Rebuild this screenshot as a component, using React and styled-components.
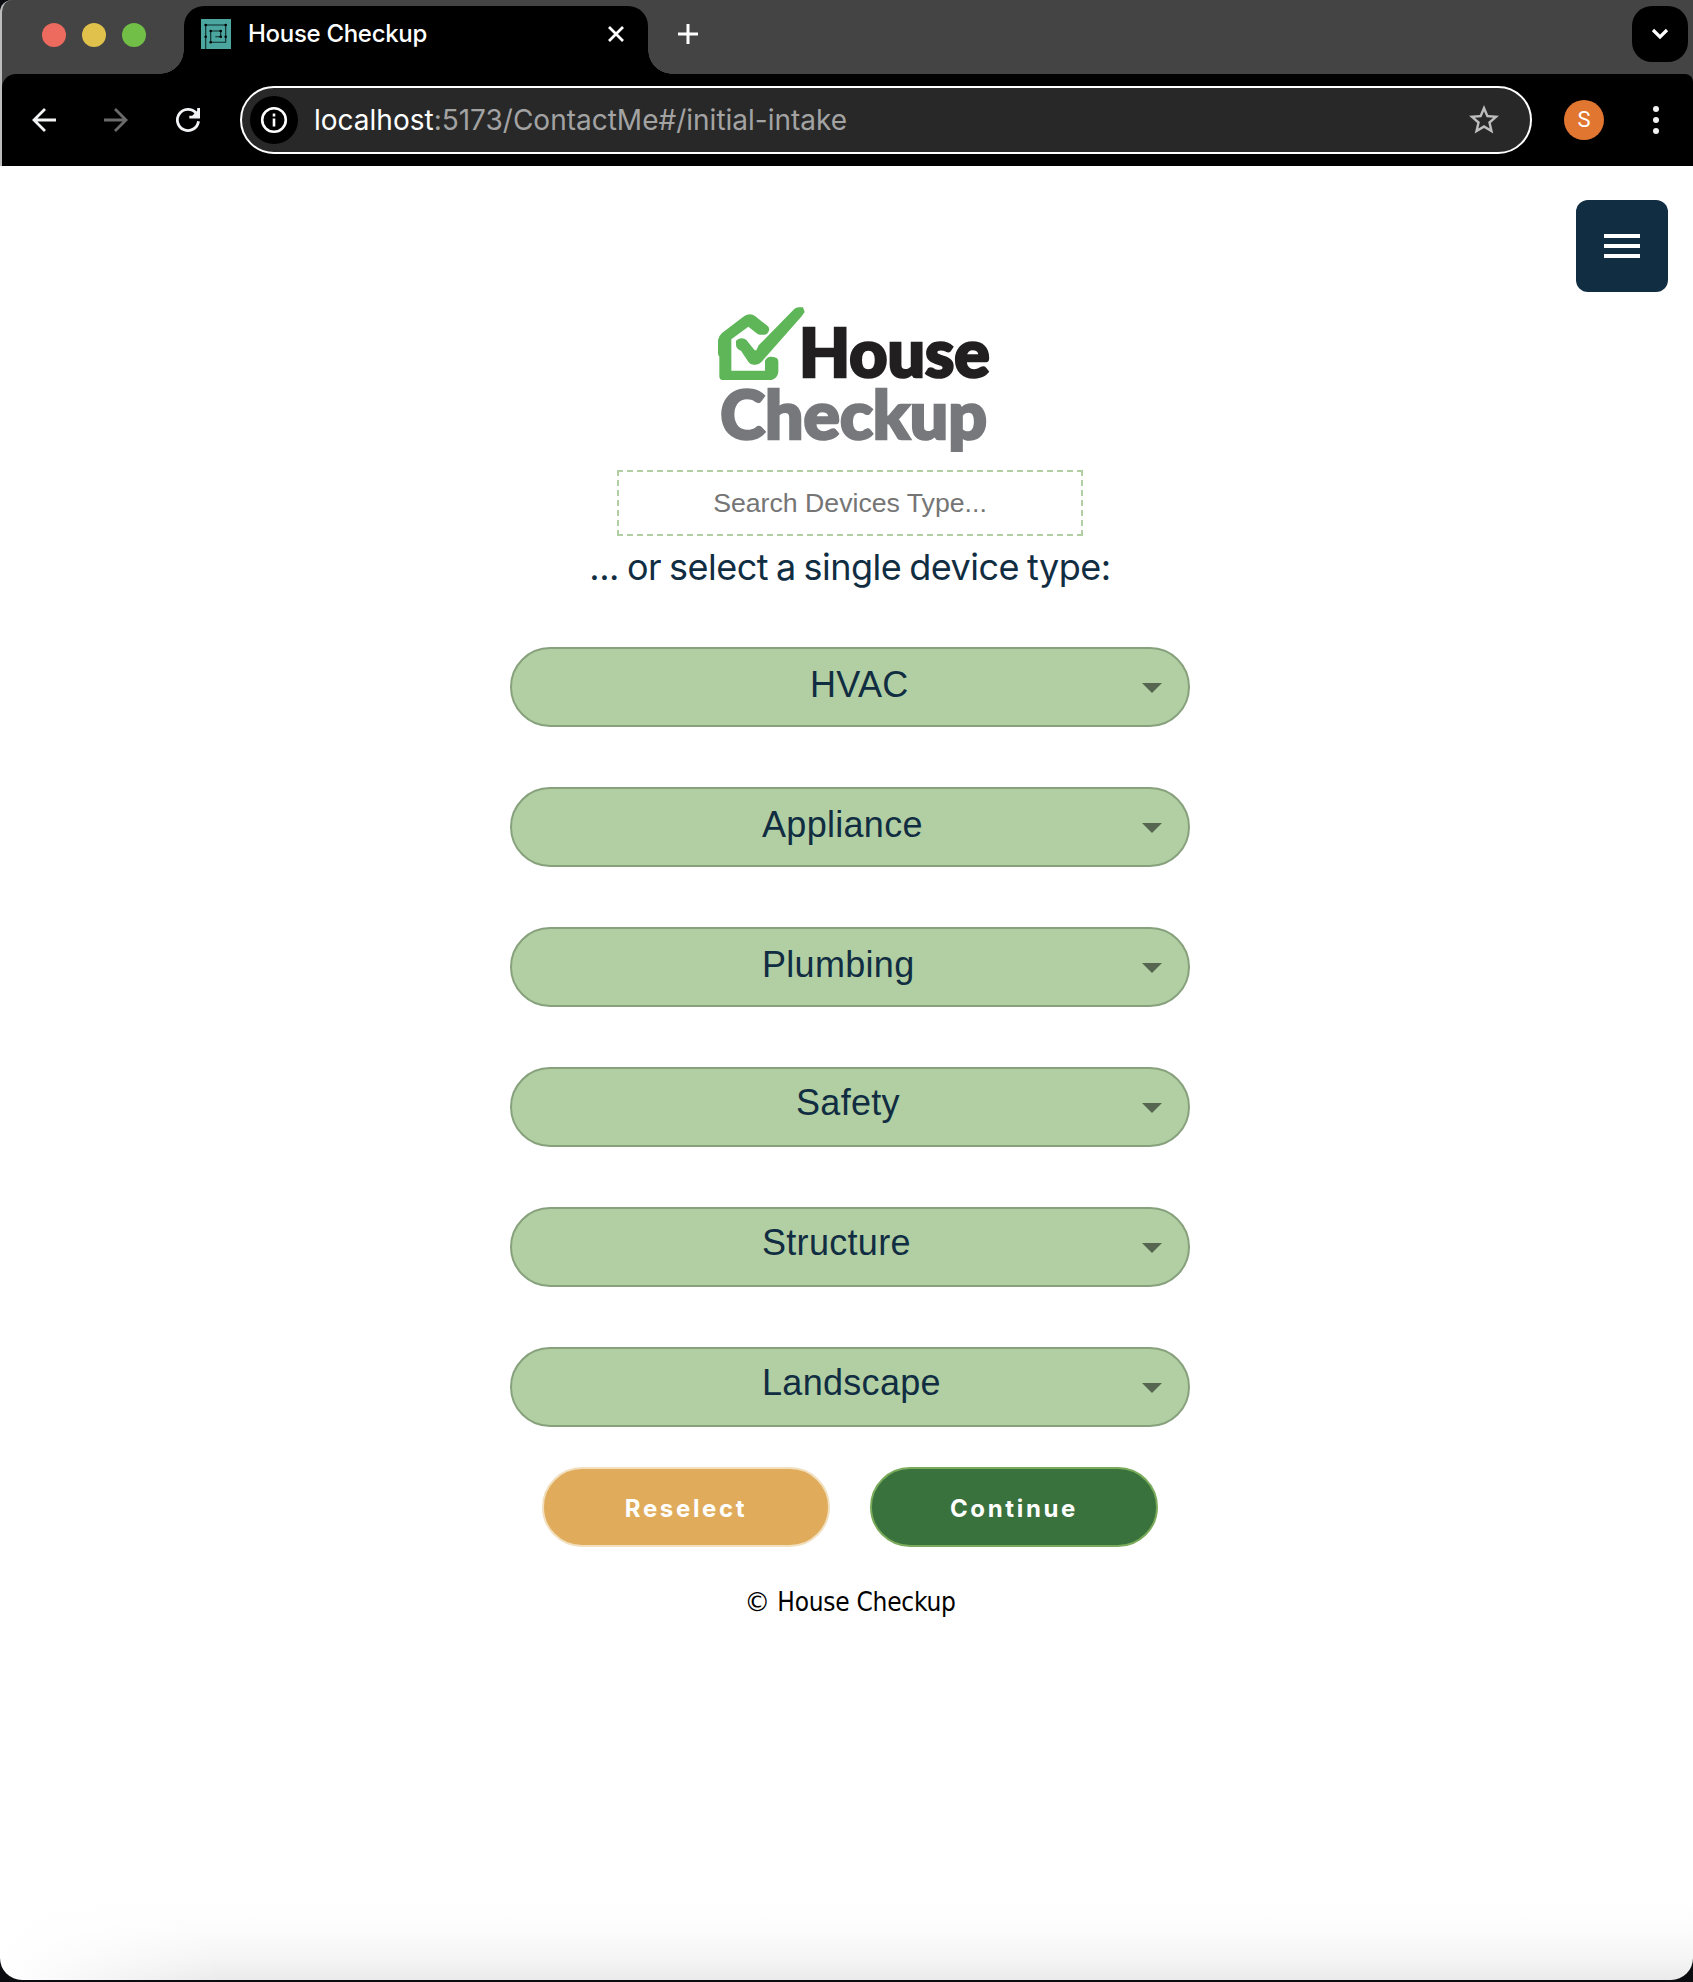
import React from "react";
import styled, { createGlobalStyle } from "styled-components";

const GlobalStyle = createGlobalStyle`
  *, *::before, *::after { box-sizing: border-box; }
  body { margin: 0; background: #0a0c10; }
  button, input { font: inherit; margin: 0; }
`;

const navy = "#112d42";
const uiFont = `Inter, "Liberation Sans", sans-serif`;
const formFont = `"Liberation Sans", Arial, sans-serif`;

const Window = styled.div`
  width: 1693px;
  height: 1982px;
  display: flex;
  flex-direction: column;
  overflow: hidden;
  background: #0a0c10;
  font-family: ${uiFont};
`;

const Chrome = styled.header`
  flex: none;
  background: #444;
  border-left: 2px solid #bdbdbd;
  border-top-left-radius: 12px;
`;

const TabStrip = styled.div`
  height: 74px;
  display: flex;
  align-items: flex-start;
  padding: 6px 5px 0 38px;
`;

const Lights = styled.div`
  display: flex;
  gap: 16px;
  width: 144px;
  padding: 17px 0 0 2px;
`;

const Light = styled.span`
  width: 24px;
  height: 24px;
  border-radius: 50%;
  background: ${(p) => p.$color};
`;

const Tab = styled.div`
  position: relative;
  width: 464px;
  height: 68px;
  padding: 0 22px 12px 17px;
  display: flex;
  align-items: center;
  background: #000;
  border-radius: 20px 20px 0 0;
  &::before,
  &::after {
    content: "";
    position: absolute;
    bottom: 0;
    width: 24px;
    height: 24px;
  }
  &::before {
    left: -24px;
    background: radial-gradient(circle at 0 0, transparent 23.5px, #000 24px);
  }
  &::after {
    right: -24px;
    background: radial-gradient(circle at 100% 0, transparent 23.5px, #000 24px);
  }
`;

const TabTitle = styled.span`
  flex: 1;
  margin-left: 17px;
  padding-bottom: 1px;
  color: #fff;
  font-size: 24px;
  line-height: 30px;
  letter-spacing: -0.3px;
  font-weight: 500;
  white-space: nowrap;
`;

const NewTab = styled.div`
  margin: 16px 0 0 28px;
  height: 24px;
  flex: 1;
`;

const TabSearch = styled.div`
  width: 56px;
  height: 56px;
  border-radius: 20px;
  background: #000;
  display: grid;
  place-items: center;
`;

const Toolbar = styled.div`
  height: 92px;
  display: flex;
  align-items: center;
  padding-left: 26px;
  background: #000;
  border-radius: 14px 8px 0 0;
`;

const NavIcons = styled.div`
  display: flex;
  gap: 40px;
  width: 212px;
`;

const Address = styled.div`
  width: 1292px;
  height: 68px;
  display: flex;
  align-items: center;
  padding: 0 28px 0 8px;
  border: 2px solid #fff;
  border-radius: 34px;
  background: #282828;
`;

const InfoBadge = styled.span`
  width: 48px;
  height: 48px;
  border-radius: 50%;
  background: #000;
  display: grid;
  place-items: center;
`;

const Url = styled.span`
  flex: 1;
  margin-left: 16px;
  font-size: 28px;
  line-height: 36px;
  color: #a3a3a3;
  white-space: nowrap;
`;

const Host = styled.span`
  color: #fff;
`;

const Avatar = styled.span`
  width: 40px;
  height: 40px;
  margin-left: 32px;
  border-radius: 50%;
  background: #e0762f;
  color: #fff;
  font: 22px/40px Roboto, sans-serif;
  text-align: center;
`;

const Kebab = styled.span`
  display: flex;
  flex-direction: column;
  gap: 5px;
  margin-left: 49px;
`;

const Dot = styled.i`
  width: 6px;
  height: 6px;
  border-radius: 50%;
  background: #f1f3f4;
`;

const Page = styled.main`
  height: 1814px;
  flex: none;
  display: flex;
  flex-direction: column;
  border-radius: 0 0 22px 22px;
  background:
    linear-gradient(to right, #fff, rgba(255, 255, 255, 0) 220px),
    linear-gradient(to top, #ebebeb, #f5f5f5 22px, #fcfcfc 50px, #fff 80px);
`;

const MenuBar = styled.div`
  height: 134px;
  display: flex;
  justify-content: flex-end;
  padding: 34px 25px 0 0;
`;

const MenuButton = styled.button`
  width: 92px;
  height: 92px;
  padding: 0;
  border: 0;
  border-radius: 12px;
  background: ${navy};
  display: flex;
  flex-direction: column;
  align-items: center;
  justify-content: center;
  gap: 6px;
`;

const MenuLine = styled.span`
  width: 36px;
  height: 4px;
  background: #fff;
`;

const Content = styled.div`
  padding-left: 7px;
  display: flex;
  flex-direction: column;
  align-items: center;
`;

const Logo = styled.svg`
  display: block;
  width: 320px;
  height: 160px;
`;

const Search = styled.input`
  width: 466px;
  height: 66px;
  margin-top: 10px;
  padding: 0;
  border: 2px dashed #b1cfa3;
  background: #fff;
  text-align: center;
  font-family: ${formFont};
  font-size: 26.67px;
  &::placeholder {
    color: #757575;
    opacity: 1;
  }
`;

const Hint = styled.p`
  margin: 7px 0 0;
  color: ${navy};
  font-size: 36px;
  line-height: 48px;
  letter-spacing: -0.5px;
  word-spacing: -1.7px;
  white-space: nowrap;
`;

const DeviceList = styled.div`
  display: flex;
  flex-direction: column;
  gap: 60px;
  margin-top: 56px;
`;

const DeviceSelect = styled.button`
  width: 680px;
  height: 80px;
  display: flex;
  align-items: flex-start;
  justify-content: space-between;
  padding: 0 26px 0 ${(p) => p.$indent}px;
  border: 2px solid #88a17d;
  border-radius: 40px;
  background: #b1cfa3;
  color: ${navy};
  font-family: ${formFont};
  font-size: 36px;
  line-height: ${(p) => p.$line}px;
  letter-spacing: 0.3px;
  text-align: left;
`;

const Caret = styled.span`
  margin-top: 34px;
  border: 10px solid transparent;
  border-top-color: #566650;
  border-bottom: 0;
`;

const Actions = styled.div`
  display: flex;
  gap: 40px;
  margin-top: 40px;
`;

const Action = styled.button`
  width: 288px;
  height: 80px;
  padding: 4px 0 0;
  border: 2px solid ${(p) => p.$edge};
  border-radius: 40px;
  background: ${(p) => p.$fill};
  color: #fff;
  font-family: ${uiFont};
  font-size: 24px;
  font-weight: 700;
  line-height: 30px;
  letter-spacing: 2.65px;
`;

const Footer = styled.footer`
  margin-top: 40px;
  color: #000;
  font-family: "DejaVu Sans Condensed", "DejaVu Sans", sans-serif;
  font-size: 26px;
  line-height: 30px;
  letter-spacing: -0.25px;
`;

const CopyrightMark = styled.span`
  font-family: "DejaVu Sans", sans-serif;
`;

const devices = [
  { name: "HVAC", indent: 298, line: 71 },
  { name: "Appliance", indent: 250, line: 71 },
  { name: "Plumbing", indent: 250, line: 71 },
  { name: "Safety", indent: 284, line: 67 },
  { name: "Structure", indent: 250, line: 67 },
  { name: "Landscape", indent: 250, line: 67 },
];

const faviconNodes = [
  [4.7, 6],
  [24.7, 6],
  [4.7, 17.7],
  [24.7, 17.7],
  [9.7, 12],
  [19.7, 12],
  [19.7, 17.7],
  [9.7, 23.3],
];

const Favicon = () => (
  <svg width="30" height="30" viewBox="0 0 30 30">
    <rect width="30" height="30" fill="#4ba6a0" />
    <g fill="none" stroke="#0c2b2b" strokeWidth="1.1">
      <path d="M4.7 30V6h20v17.3h-15V12h10v5.7h-5.4" />
    </g>
    {faviconNodes.map(([cx, cy]) => (
      <circle key={`${cx}-${cy}`} cx={cx} cy={cy} r="1.3" fill="#000" />
    ))}
  </svg>
);

const HouseLogo = () => (
  <Logo viewBox="0 30 960 480">
    <g fill="#5fb658">
      <path d="M84 150Q86 138 96 129L162 79Q180 66 196 79L233 108Q241 116 235 126Q231 135 222 134H210Q204 134 198 128L175 110L124 148V242H225V212Q231 199 245 200Q265 201 265 214V246Q263 264 245 270H96Q88 268 88 258V200Q83 195 84 185Z" />
      <path d="M138 152Q150 142 163 146Q170 149 174 156L194 181H199L206 166L312 58Q318 52 326 52H339L344 66L335 79L215 215Q207 224 196 224Q181 226 176 217L153 182Q138 176 138 164Z" />
    </g>
    <text fontFamily="Lato, sans-serif" fontWeight="900" strokeWidth="8">
      <tspan x="327" y="261" fontSize="198" textLength="572" lengthAdjust="spacingAndGlyphs" fill="#221f21" stroke="#221f21">House</tspan>
      <tspan x="91" y="447" fontSize="202" textLength="800" lengthAdjust="spacingAndGlyphs" fill="#77787c" stroke="#77787c">Checkup</tspan>
    </text>
  </Logo>
);

export default function App() {
  return (
    <>
      <GlobalStyle />
      <Window>
        <Chrome>
          <TabStrip>
            <Lights>
              <Light $color="#ec6a5e" />
              <Light $color="#e0c14c" />
              <Light $color="#72bf47" />
            </Lights>
            <Tab>
              <Favicon />
              <TabTitle>House Checkup</TabTitle>
              <svg width="20" height="20" viewBox="0 0 20 20" stroke="#fff" strokeWidth="2.8">
                <path d="M3 3l14 14M17 3L3 17" />
              </svg>
            </Tab>
            <NewTab>
              <svg width="24" height="24" viewBox="0 0 24 24" stroke="#fff" strokeWidth="3">
                <path d="M12 2v20M2 12h20" />
              </svg>
            </NewTab>
            <TabSearch>
              <svg width="20" height="14" viewBox="0 0 20 14" fill="none" stroke="#fff" strokeWidth="3.2">
                <path d="M3 3l7 7 7-7" />
              </svg>
            </TabSearch>
          </TabStrip>
          <Toolbar>
            <NavIcons>
              <svg width="32" height="32" viewBox="0 0 32 32" fill="none" stroke="#f1f3f4" strokeWidth="2.8">
                <path d="M28 16H6M17 5L6 16l11 11" />
              </svg>
              <svg width="32" height="32" viewBox="0 0 32 32" fill="none" stroke="#6b6b6b" strokeWidth="2.8">
                <path d="M4 16h22M15 5l11 11-11 11" />
              </svg>
              <svg width="32" height="32" viewBox="0 0 32 32" fill="none" stroke="#f1f3f4" strokeWidth="2.8">
                <path d="M26.5 17.3A10.6 10.6 0 1 1 24 9" />
                <path d="M26.6 4v9.2H17.3" />
                <path d="M19 13l7-7v7z" fill="#f1f3f4" stroke="none" />
              </svg>
            </NavIcons>
            <Address>
              <InfoBadge>
                <svg width="28" height="28" viewBox="0 0 28 28" fill="none" stroke="#fff" strokeWidth="2.6">
                  <circle cx="14" cy="14" r="11.8" />
                  <path d="M14 12.6v8M14 7.6v2.8" />
                </svg>
              </InfoBadge>
              <Url>
                <Host>localhost</Host>:5173/ContactMe#/initial-intake
              </Url>
              <svg width="36" height="36" viewBox="0 0 24 24" fill="#bdbdbd">
                <path d="M22 9.24l-7.19-.62L12 2 9.19 8.63 2 9.24l5.46 4.73L5.82 21 12 17.27 18.18 21l-1.63-7.03L22 9.24zM12 15.4l-3.76 2.27 1-4.28-3.32-2.88 4.38-.38L12 6.1l1.71 4.04 4.38.38-3.32 2.88 1 4.28L12 15.4z" />
              </svg>
            </Address>
            <Avatar>S</Avatar>
            <Kebab>
              <Dot />
              <Dot />
              <Dot />
            </Kebab>
          </Toolbar>
        </Chrome>
        <Page>
          <MenuBar>
            <MenuButton aria-label="Menu">
              <MenuLine />
              <MenuLine />
              <MenuLine />
            </MenuButton>
          </MenuBar>
          <Content>
            <HouseLogo />
            <Search placeholder="Search Devices Type..." />
            <Hint>... or select a single device type:</Hint>
            <DeviceList>
              {devices.map((d) => (
                <DeviceSelect key={d.name} $indent={d.indent} $line={d.line}>
                  {d.name}
                  <Caret />
                </DeviceSelect>
              ))}
            </DeviceList>
            <Actions>
              <Action $fill="#e0ac5c" $edge="#f1dfbd">Reselect</Action>
              <Action $fill="#3a723e" $edge="#7aab5b">Continue</Action>
            </Actions>
            <Footer>
              <CopyrightMark>©</CopyrightMark> House Checkup
            </Footer>
          </Content>
        </Page>
      </Window>
    </>
  );
}
